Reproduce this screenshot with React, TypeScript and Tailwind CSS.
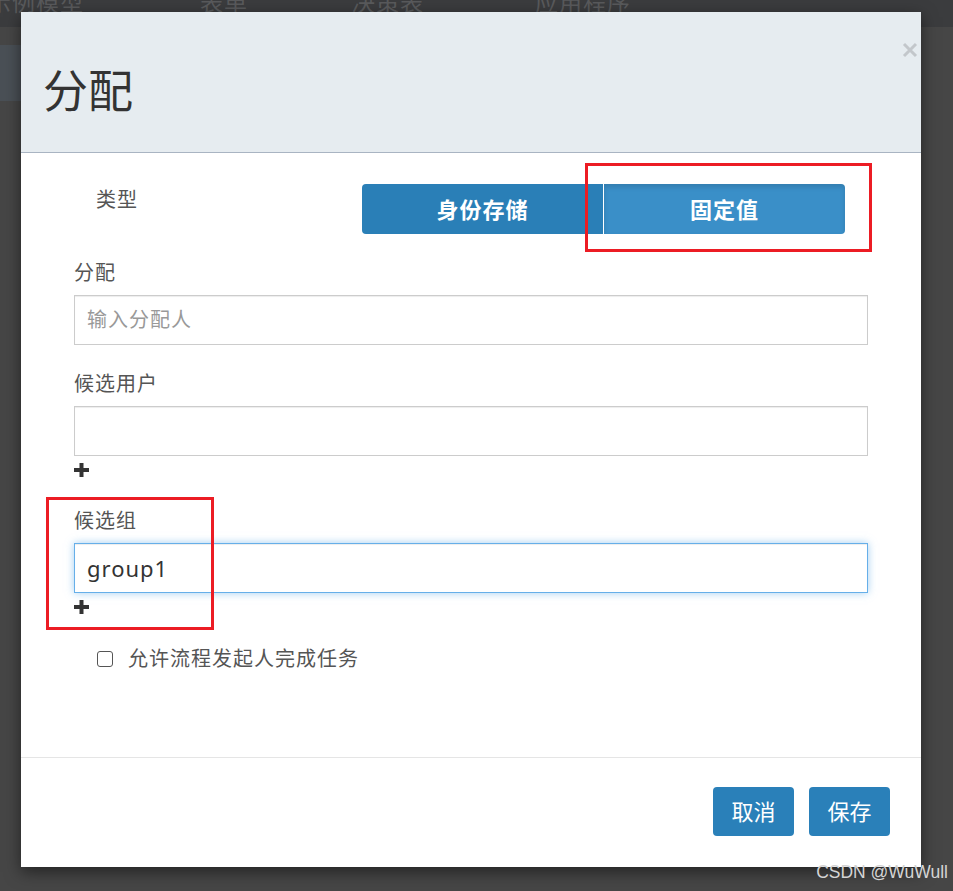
import React from "react";

const FONT = '"Noto Sans", "Noto Sans CJK SC", "Liberation Sans", sans-serif';

function Plus() {
  return (
    <svg width="15" height="14" viewBox="0 0 15 14" className="block">
      <rect x="5.5" y="0" width="4" height="14" fill="#333" />
      <rect x="0" y="5" width="15" height="4" fill="#333" />
    </svg>
  );
}

export default function App() {
  return (
    <div
      className="relative w-[953px] h-[891px] overflow-hidden bg-[#464646]"
      style={{ fontFamily: FONT }}
    >
      {/* background page */}
      <div className="h-[27px] bg-[#3b3c3e] flex items-start overflow-hidden">
        <div className="flex -mt-[13px] text-[23px] leading-[30px] text-[#595a5c] whitespace-nowrap tracking-[1px]">
          <span className="-ml-[12px] w-[212px]">示例模型</span>
          <span className="w-[152px]">表单</span>
          <span className="w-[183px]">决策表</span>
          <span>应用程序</span>
        </div>
      </div>
      <div className="flex">
        <div className="w-[21px] h-[56px] mt-[18px] bg-[#4a5056]" />
      </div>

      {/* modal */}
      <div className="absolute left-[21px] top-[12px] w-[900px] h-[855px] bg-white flex flex-col shadow-[0_5px_15px_rgba(0,0,0,0.5)]">
        <div className="relative h-[141px] bg-[#e6ecf0] border-b border-[#a9b4c2] flex items-center pt-[18px] pl-[22px]">
          <h1 className="text-[45px] leading-[52px] text-[#333] font-normal">分配</h1>
          <svg
            width="16"
            height="16"
            viewBox="0 0 16 16"
            className="absolute left-[881px] top-[30px]"
          >
            <path d="M2 2 L14 14 M14 2 L2 14" stroke="#c3c7cb" strokeWidth="3" />
          </svg>
        </div>

        <div className="flex-1 px-[53px] pt-[31px]">
          <div className="flex items-start">
            <div className="w-[288px] pl-[22px] pt-[4px] text-[20px] leading-[24px] tracking-[1px] text-[#555]">类型</div>
            <div className="flex w-[483px] h-[50px] rounded-[4px] overflow-hidden">
              <div className="w-[241px] bg-[#2a7fb7] flex items-center justify-center text-white text-[22px] tracking-[1px] font-bold">
                身份存储
              </div>
              <div className="w-[1px] bg-white" />
              <div className="flex-1 bg-[#3a8fc8] shadow-[inset_0_3px_5px_rgba(0,0,0,0.125)] flex items-center justify-center text-white text-[22px] tracking-[1px] font-bold">
                固定值
              </div>
            </div>
          </div>

          <div className="mt-[27px] text-[20px] leading-[24px] tracking-[1px] text-[#555]">分配</div>
          <div className="mt-[10px] h-[50px] border border-[#ccc] flex items-center pl-[12px] text-[20px] tracking-[1px] text-[#999] shadow-[inset_0_1px_1px_rgba(0,0,0,0.075)]">
            输入分配人
          </div>

          <div className="mt-[27px] text-[20px] leading-[24px] tracking-[1px] text-[#555]">候选用户</div>
          <div className="mt-[10px] h-[50px] border border-[#ccc] shadow-[inset_0_1px_1px_rgba(0,0,0,0.075)]" />
          <div className="mt-[7px]">
            <Plus />
          </div>

          <div className="mt-[32px] text-[20px] leading-[24px] tracking-[1px] text-[#555]">候选组</div>
          <div className="mt-[10px] h-[50px] border border-[#66afe9] flex items-center pl-[12px] text-[22px] tracking-[1px] text-[#333] shadow-[inset_0_1px_1px_rgba(0,0,0,0.075),0_0_8px_rgba(102,175,233,0.6)]">
            group1
          </div>
          <div className="mt-[7px]">
            <Plus />
          </div>

          <div className="mt-[33px] flex items-center pl-[23px] h-[24px]">
            <span className="w-[16px] h-[16px] rounded-[3px] border border-[#555] bg-white" />
            <span className="ml-[15px] text-[20px] leading-[24px] tracking-[1px] text-[#555]">允许流程发起人完成任务</span>
          </div>
        </div>

        <div className="h-[110px] border-t border-[#e5e5e5] flex justify-end items-start pt-[29px] pr-[31px] gap-[15px]">
          <button className="w-[81px] h-[49px] rounded-[4px] bg-[#2a80b9] text-white text-[22px]">取消</button>
          <button className="w-[81px] h-[49px] rounded-[4px] bg-[#2a80b9] text-white text-[22px]">保存</button>
        </div>
      </div>

      {/* annotation boxes */}
      <div className="absolute left-[585px] top-[163px] w-[287px] h-[89px] border-[3px] border-[#ec1c24]" />
      <div className="absolute left-[46px] top-[497px] w-[168px] h-[133px] border-[3px] border-[#ec1c24]" />

      {/* watermark */}
      <div className="absolute right-[5px] top-[861px] text-[17.5px] leading-[22px] text-[#d4d4d4]" style={{ fontFamily: '"Liberation Sans", sans-serif' }}>
        CSDN @WuWull
      </div>
    </div>
  );
}
